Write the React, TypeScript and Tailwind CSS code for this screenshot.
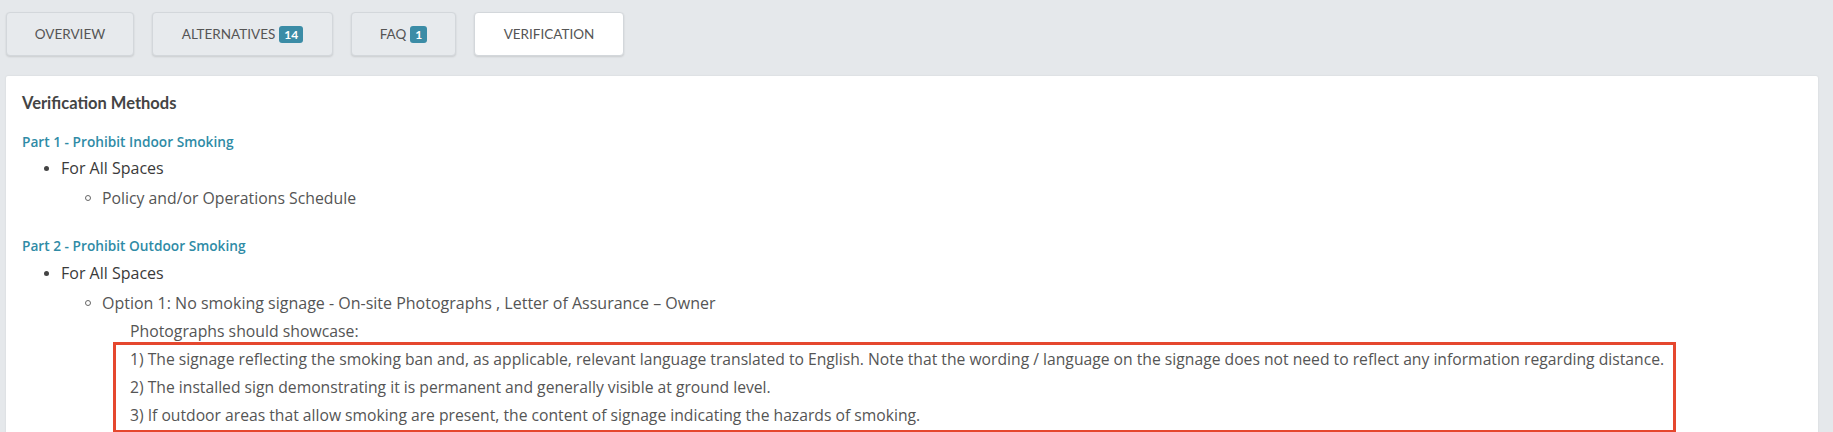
const tabs = [
  { label: 'OVERVIEW', width: 'w-[128px]' },
  { label: 'ALTERNATIVES', badge: '14', width: 'w-[181px]' },
  { label: 'FAQ', badge: '1', width: 'w-[105px]' },
  { label: 'VERIFICATION', width: 'w-[150px]', active: true },
];

const showcase = [
  '1) The signage reflecting the smoking ban and, as applicable, relevant language translated to English. Note that the wording / language on the signage does not need to reflect any information regarding distance.',
  '2) The installed sign demonstrating it is permanent and generally visible at ground level.',
  '3) If outdoor areas that allow smoking are present, the content of signage indicating the hazards of smoking.',
];

function Disc({ children, className = '' }: { children: React.ReactNode; className?: string }) {
  return (
    <div className={`flex items-center pl-[22px] text-[16px] leading-6 text-[#3a3a3a] ${className}`}>
      <span className="w-[5px] h-[5px] rounded-full bg-[#444] mr-[12px]" />
      {children}
    </div>
  );
}

function Circle({ children, className = '' }: { children: React.ReactNode; className?: string }) {
  return (
    <div className={`flex items-center pl-[63px] text-[15.8px] leading-6 text-[#555] ${className}`}>
      <span className="w-[6px] h-[6px] rounded-full border border-[#666] mr-[11px]" />
      {children}
    </div>
  );
}

export default function App() {
  return (
    <div className="min-h-screen bg-[#e5e8eb] pt-3 pl-[6px] pr-[15px] font-['Open_Sans',sans-serif] overflow-hidden">
      {/* Tabs */}
      <div className="flex gap-[18px] font-['Lato',sans-serif]">
        {tabs.map((t) => (
          <div
            key={t.label}
            className={`${t.width} h-[44px] flex items-center justify-center gap-[4px] rounded-[4px] border border-[#d3d7db] shadow-[0_1px_2px_rgba(0,0,0,0.12)] text-[13.5px] text-[#555] ${
              t.active ? 'bg-white' : 'bg-[#e7eaed]'
            }`}
          >
            <span>{t.label}</span>
            {t.badge && (
              <span className="px-[5px] h-[17px] leading-[17px] rounded-[3px] bg-[#3b8ca6] text-white text-[12px] font-bold">
                {t.badge}
              </span>
            )}
          </div>
        ))}
      </div>

      {/* Panel */}
      <div className="mt-[20px] bg-white rounded-t-[2px] shadow-[0_0_2px_rgba(0,0,0,0.1)] pt-[15px] pl-4 pb-10 h-[400px]">
        <h3 className="text-[16.5px] leading-6 font-bold text-[#444] font-['Lato',sans-serif]">Verification Methods</h3>

        <p className="mt-[17px] text-[13.7px] leading-5 font-semibold text-[#2f8ba6]">Part 1 - Prohibit Indoor Smoking</p>
        <Disc className="mt-[4px]">For All Spaces</Disc>
        <Circle className="mt-[6px]">Policy and/or Operations Schedule</Circle>

        <p className="mt-[26px] text-[13.7px] leading-5 font-semibold text-[#2f8ba6]">Part 2 - Prohibit Outdoor Smoking</p>
        <Disc className="mt-[5px]">For All Spaces</Disc>
        <Circle className="mt-[6px]">
          <span className="text-[16px]">Option 1: No smoking signage - On-site Photographs , Letter of Assurance – Owner</span>
        </Circle>
        <p className="mt-[5px] pl-[108px] text-[15.8px] leading-[22px] text-[#555]">Photographs should showcase:</p>

        <div className="ml-[91px] w-[1563px] border-[3px] border-[#e5472e] pl-[14px] pb-[1px]">
          {showcase.map((s) => (
            <p key={s} className="text-[15.7px] leading-[28px] text-[#555] whitespace-nowrap">
              {s}
            </p>
          ))}
        </div>
      </div>
    </div>
  );
}
